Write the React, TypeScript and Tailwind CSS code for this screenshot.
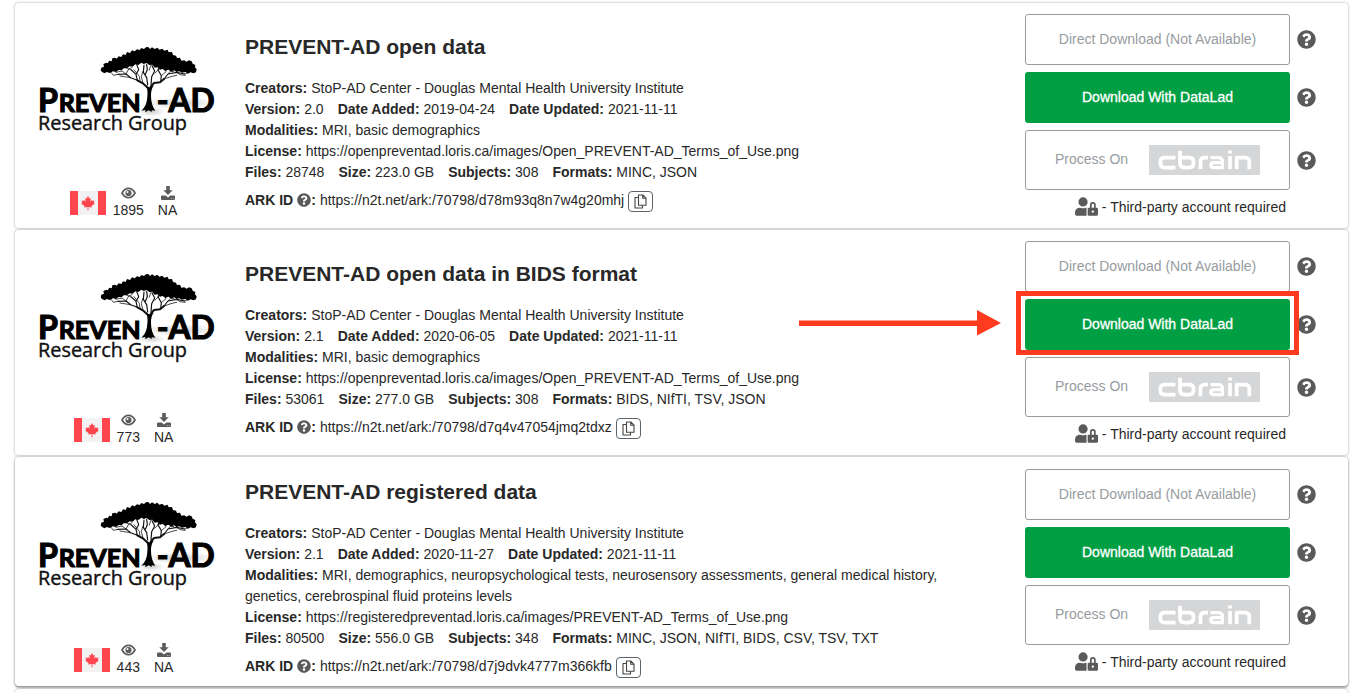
import React from "react";
import { FaQuestionCircle, FaUserLock } from "react-icons/fa";

type Dataset = {
  title: string;
  box: string;
  textPad: string;
  version: string;
  added: string;
  updated: string;
  modalities: string;
  license: string;
  files: string;
  size: string;
  subjects: string;
  formats: string;
  ark: string;
  views: string;
  highlight?: boolean;
};

const datasets: Dataset[] = [
  {
    title: "PREVENT-AD open data",
    box: "h-[225px] mb-[2px] shadow-[0_0_3px_rgba(0,0,0,0.35)]",
    textPad: "pt-[31px]",
    version: "2.0",
    added: "2019-04-24",
    updated: "2021-11-11",
    modalities: "MRI, basic demographics",
    license: "https://openpreventad.loris.ca/images/Open_PREVENT-AD_Terms_of_Use.png",
    files: "28748",
    size: "223.0 GB",
    subjects: "308",
    formats: "MINC, JSON",
    ark: "https://n2t.net/ark:/70798/d78m93q8n7w4g20mhj",
    views: "1895",
  },
  {
    title: "PREVENT-AD open data in BIDS format",
    box: "h-[225px] mb-[2px] shadow-[0_0_3px_rgba(0,0,0,0.35)]",
    textPad: "pt-[31px]",
    version: "2.1",
    added: "2020-06-05",
    updated: "2021-11-11",
    modalities: "MRI, basic demographics",
    license: "https://openpreventad.loris.ca/images/Open_PREVENT-AD_Terms_of_Use.png",
    files: "53061",
    size: "277.0 GB",
    subjects: "308",
    formats: "BIDS, NIfTI, TSV, JSON",
    ark: "https://n2t.net/ark:/70798/d7q4v47054jmq2tdxz",
    views: "773",
    highlight: true,
  },
  {
    title: "PREVENT-AD registered data",
    box: "h-[229px] pt-px pb-px shadow-[0_0_3px_rgba(0,0,0,0.35),0_2px_2px_rgba(0,0,0,0.3)]",
    textPad: "pt-[21px]",
    version: "2.1",
    added: "2020-11-27",
    updated: "2021-11-11",
    modalities:
      "MRI, demographics, neuropsychological tests, neurosensory assessments, general medical history, genetics, cerebrospinal fluid proteins levels",
    license: "https://registeredpreventad.loris.ca/images/PREVENT-AD_Terms_of_Use.png",
    files: "80500",
    size: "556.0 GB",
    subjects: "348",
    formats: "MINC, JSON, NIfTI, BIDS, CSV, TSV, TXT",
    ark: "https://n2t.net/ark:/70798/d7j9dvk4777m366kfb",
    views: "443",
  },
];

function Logo() {
  return (
    <svg width="190" height="105" viewBox="0 0 570 315" className="block" aria-label="PREVENT-AD Research Group">
      <defs>
        <radialGradient id="ground">
          <stop offset="0" stopColor="#888" stopOpacity=".4" />
          <stop offset="1" stopColor="#888" stopOpacity="0" />
        </radialGradient>
      </defs>
      <ellipse cx="450" cy="204" rx="115" ry="18" fill="url(#ground)" />
      <ellipse cx="365" cy="230" rx="40" ry="14" fill="url(#ground)" />
      <path
        d="M212 106L214 98 222 95 220 87 229 83 233 85 238 77 245 79 247 70 256 68 260 71 266 64 274 66 279 58 287 60 291 51 300 54 306 46 314 49 321 43 329 45 334 39 342 42 349 36 356 37 360 42 366 37 374 42 382 38 388 44 397 41 403 47 413 44 416 52 426 51 429 60 438 62 441 69 450 68 454 77 463 76 469 80 477 76 485 79 488 86 496 90 495 97 500 103 498 112 490 115 482 112 474 116 466 111 456 113 448 109 440 111 432 106 424 110 415 104 406 108 398 102 390 104 383 97 374 98 367 89 358 90 350 84 341 87 334 83 325 90 316 88 308 95 299 94 291 100 281 100 275 106 266 105 258 111 249 109 240 114 230 111 224 115 216 111Z"
        fill="#000"
      />
      <g fill="none" stroke="#111" strokeLinecap="round" strokeLinejoin="round">
        <path strokeWidth="6" d="M355 160L340 146 322 136M362 156L372 144 390 142 402 132" />
        <path strokeWidth="3.5" d="M322 136L302 128 288 117 264 118M322 136L318 118 304 105M353 150L350 128 340 112 342 90M363 150L365 125 374 108 366 92M402 132L414 117 440 112 464 117M392 141L394 122 384 104 388 95M345 120L352 104 350 88M318 118L326 104 320 88" />
        <path strokeWidth="2.3" d="M288 117L276 108 258 112M264 118L250 121 244 113M288 117L296 102 306 98M302 128L282 125 270 123M339 145L334 125 338 110M374 115L390 100M394 122L408 110 402 100M414 117L422 108 432 110M440 112L450 119 466 121M464 117L474 113M402 132L426 124 440 121M304 105L288 98M358 105L362 92M330 138L328 124 312 104" />
      </g>
      <path d="M349 155Q354 165 352 185Q351 212 334 227L346 225 346 232 356 226 365 231 365 226 376 227Q363 210 363 183Q362 164 371 152L359 157Z" />
      <text y="230" fill="#000" stroke="#000" strokeWidth="3.5" fontFamily="Lato, sans-serif" fontWeight="700">
        <tspan x="24" fontSize="98" textLength="60" lengthAdjust="spacingAndGlyphs">P</tspan>
        <tspan x="86" fontSize="76" textLength="246" lengthAdjust="spacingAndGlyphs">REVEN</tspan>
        <tspan x="380" fontSize="98" textLength="174" lengthAdjust="spacingAndGlyphs">-AD</tspan>
      </text>
      <text x="24" y="284" fontSize="59" textLength="447" lengthAdjust="spacingAndGlyphs" fill="#111" stroke="#111" strokeWidth="1.200" fontFamily="Open Sans, sans-serif">
        Research Group
      </text>
    </svg>
  );
}

function Flag() {
  return (
    <svg width="36" height="24" viewBox="0 0 36 24" className="mb-[5px]">
      <path fill="#f2f2f3" d="M8 0h20v24H8z" />
      <path fill="#ff464f" d="M0 0h8v24H0zM28 0h8v24h-8zM18 5l-1.4 2.600-1.500-.7.7 3.700-1.800-1.700-.4 1-2.200-.4.800 2.300-1 .6 3.400 2.900-.4 1.200 3.400-.5-.1 3.300h1l-.1-3.300 3.400.5-.4-1.200 3.400-2.900-1-.6.8-2.300-2.200.4-.4-1-1.800 1.700.7-3.700-1.500.7z" />
    </svg>
  );
}

function EyeIcon() {
  return (
    <svg width="15" height="14" viewBox="0 0 15 14" className="-mt-px mb-px block">
      <path d="M1 7Q3.600 2.400 7.500 2.400T14 7Q11.400 11.600 7.500 11.600T1 7z" fill="none" stroke="#5c5c5c" strokeWidth="1.700" />
      <circle cx="7.500" cy="7" r="3.100" fill="#5c5c5c" />
      <circle cx="6.500" cy="6" r="1" fill="#fff" />
    </svg>
  );
}

function DownloadIcon() {
  return (
    <svg width="14" height="14" viewBox="0 0 14 14" fill="#5c5c5c" className="-mt-px mb-px block">
      <path d="M5.200 0h3.600v4.200h2.900L7 9 2.300 4.200h2.900z" />
      <path d="M.7 9.500h3.900L7 11.500l2.400-2h3.900l.7.7v3.100l-.7.700H.7l-.7-.7v-3.100z" />
      <path fill="#fff" fillOpacity=".7" d="M10 12h.9v.8H10zM11.800 12h.9v.8h-.9z" />
    </svg>
  );
}

function CopyButton() {
  return (
    <button className="ml-1 mt-[2px] flex h-[21px] w-[25px] items-center justify-center rounded-[4px] border border-[#5b646c]">
      <svg width="13" height="15" viewBox="0 0 13 15" fill="none" stroke="#444" strokeWidth="1.100" strokeLinejoin="round">
        <path d="M4.500 1h4.300L12 4.200v7H4.500zM8.700 1v3.300H12" />
        <path d="M4.500 3.500H1V14h7.500v-2.800" />
      </svg>
    </button>
  );
}

function Cbrain() {
  return (
    <svg width="111" height="30" viewBox="0 0 111 30" className="mb-px block">
      <rect width="111" height="30" rx="1" fill="#d5d6d8" />
      <g fill="none" stroke="#fff" strokeWidth="3.700" strokeLinejoin="round">
        <path d="M26.500 12.600H16Q11.400 12.600 11.400 16.600v2Q11.400 22.600 16 22.600H26.500" />
        <path d="M31 5.700V18.600Q31 22.600 35.500 22.600H40Q44.500 22.600 44.500 18.600V16.600Q44.500 12.600 40 12.600H31" />
        <path d="M51.500 24.300V16.600Q51.500 12.600 56 12.600H59" />
        <path d="M61.500 12.600H69Q73.500 12.600 73.500 16.600V22.600H65Q61.800 22.600 61.800 20.200T65 17.700H73.500" strokeWidth="3.200" />
        <path d="M81 11V24.300M81 5.600V8.600" />
        <path d="M87.700 24.300V12.600H95.500Q100.300 12.600 100.300 16.600V24.300" />
      </g>
    </svg>
  );
}

function Help() {
  return <FaQuestionCircle className="ml-[7px] h-[19px] w-[19px] shrink-0 text-[#5a5a5a]" />;
}

function Field({ label, value }: { label: string; value: string }) {
  return (
    <span className="mr-[14px]">
      <b>{label}:</b> {value}
    </span>
  );
}

function Card({ d }: { d: Dataset }) {
  return (
    <section className={`${d.box} flex shrink-0 rounded-[4px] bg-white`}>
      <div className="flex w-[230px] shrink-0 flex-col justify-between pb-[8px] pt-[32px]">
        <div className="pl-[15px]">
          <Logo />
        </div>
        <div className="flex items-end justify-center pr-[13px]">
          <Flag />
          <div className="ml-[7px] flex flex-col items-center leading-[19px]">
            <EyeIcon />
            <span>{d.views}</span>
          </div>
          <div className="ml-[14px] flex flex-col items-center leading-[19px]">
            <DownloadIcon />
            <span>NA</span>
          </div>
        </div>
      </div>

      <div className={`${d.textPad} w-[720px] shrink-0 leading-[21px]`}>
        <h2 className="mb-[18px] whitespace-nowrap text-[21px] font-bold leading-[26px]">{d.title}</h2>
        <div><Field label="Creators" value="StoP-AD Center - Douglas Mental Health University Institute" /></div>
        <div>
          <Field label="Version" value={d.version} />
          <Field label="Date Added" value={d.added} />
          <Field label="Date Updated" value={d.updated} />
        </div>
        <div><b>Modalities:</b> {d.modalities}</div>
        <div><Field label="License" value={d.license} /></div>
        <div>
          <Field label="Files" value={d.files} />
          <Field label="Size" value={d.size} />
          <Field label="Subjects" value={d.subjects} />
          <Field label="Formats" value={d.formats} />
        </div>
        <div className="mt-[6px] flex items-center">
          <b>ARK ID</b>
          <FaQuestionCircle className="mb-[2px] ml-1 h-[14px] w-[14px] text-[#5a5a5a]" />
          <b className="mr-1">:</b>
          <span>{d.ark}</span>
          <CopyButton />
        </div>
      </div>

      <div className="ml-[60px] flex flex-col pt-[11px]">
        <div className="flex items-center">
          <button className="h-[51px] w-[265px] rounded-[3px] border border-[#979ca1] text-[#979ca1]">
            Direct Download (Not Available)
          </button>
          <Help />
        </div>
        <div className="relative mt-[7px] flex items-center">
          <button className="h-[51px] w-[265px] rounded-[3px] bg-[#009f43] font-normal text-white [-webkit-text-stroke:0.3px_white]">
            Download With DataLad
          </button>
          <Help />
          {d.highlight && (
            <>
              <div className="absolute -left-[9px] -top-[8px] h-[64px] w-[283px] border-[5px] border-[#ff3b1f]" />
              <svg width="204" height="26" viewBox="0 0 204 26" className="absolute -left-[226px] top-[11px] max-w-none" fill="#ff3b1f">
                <path d="M0 10.500h178V0l24 13-24 12.500V16H0z" />
              </svg>
            </>
          )}
        </div>
        <div className="mt-[7px] flex items-center">
          <button className="flex h-[60px] w-[265px] items-center rounded-[3px] border border-[#979ca1] pl-[29px] text-[#979ca1]">
            <span className="mb-px mr-[21px] whitespace-nowrap">Process On</span>
            <Cbrain />
          </button>
          <Help />
        </div>
        <div className="mt-[7px] flex h-[20px] w-[261px] items-center justify-end">
          <FaUserLock className="mb-px mr-1 h-[19px] w-[23px] text-[#5a5a5a]" />
          <span>- Third-party account required</span>
        </div>
      </div>
    </section>
  );
}

export default function App() {
  return (
    <main className="h-[693px] overflow-hidden bg-white pl-[15px] pr-[9px] pt-[3px] font-['Liberation_Sans',Arial,sans-serif] text-[14px] text-[#282828]">
      <div className="flex flex-col">
        {datasets.map((d) => (
          <Card key={d.title} d={d} />
        ))}
        <div className="mt-[3px] h-[20px] rounded-[4px] bg-white shadow-[0_0_2px_rgba(0,0,0,0.4)]" />
      </div>
    </main>
  );
}
